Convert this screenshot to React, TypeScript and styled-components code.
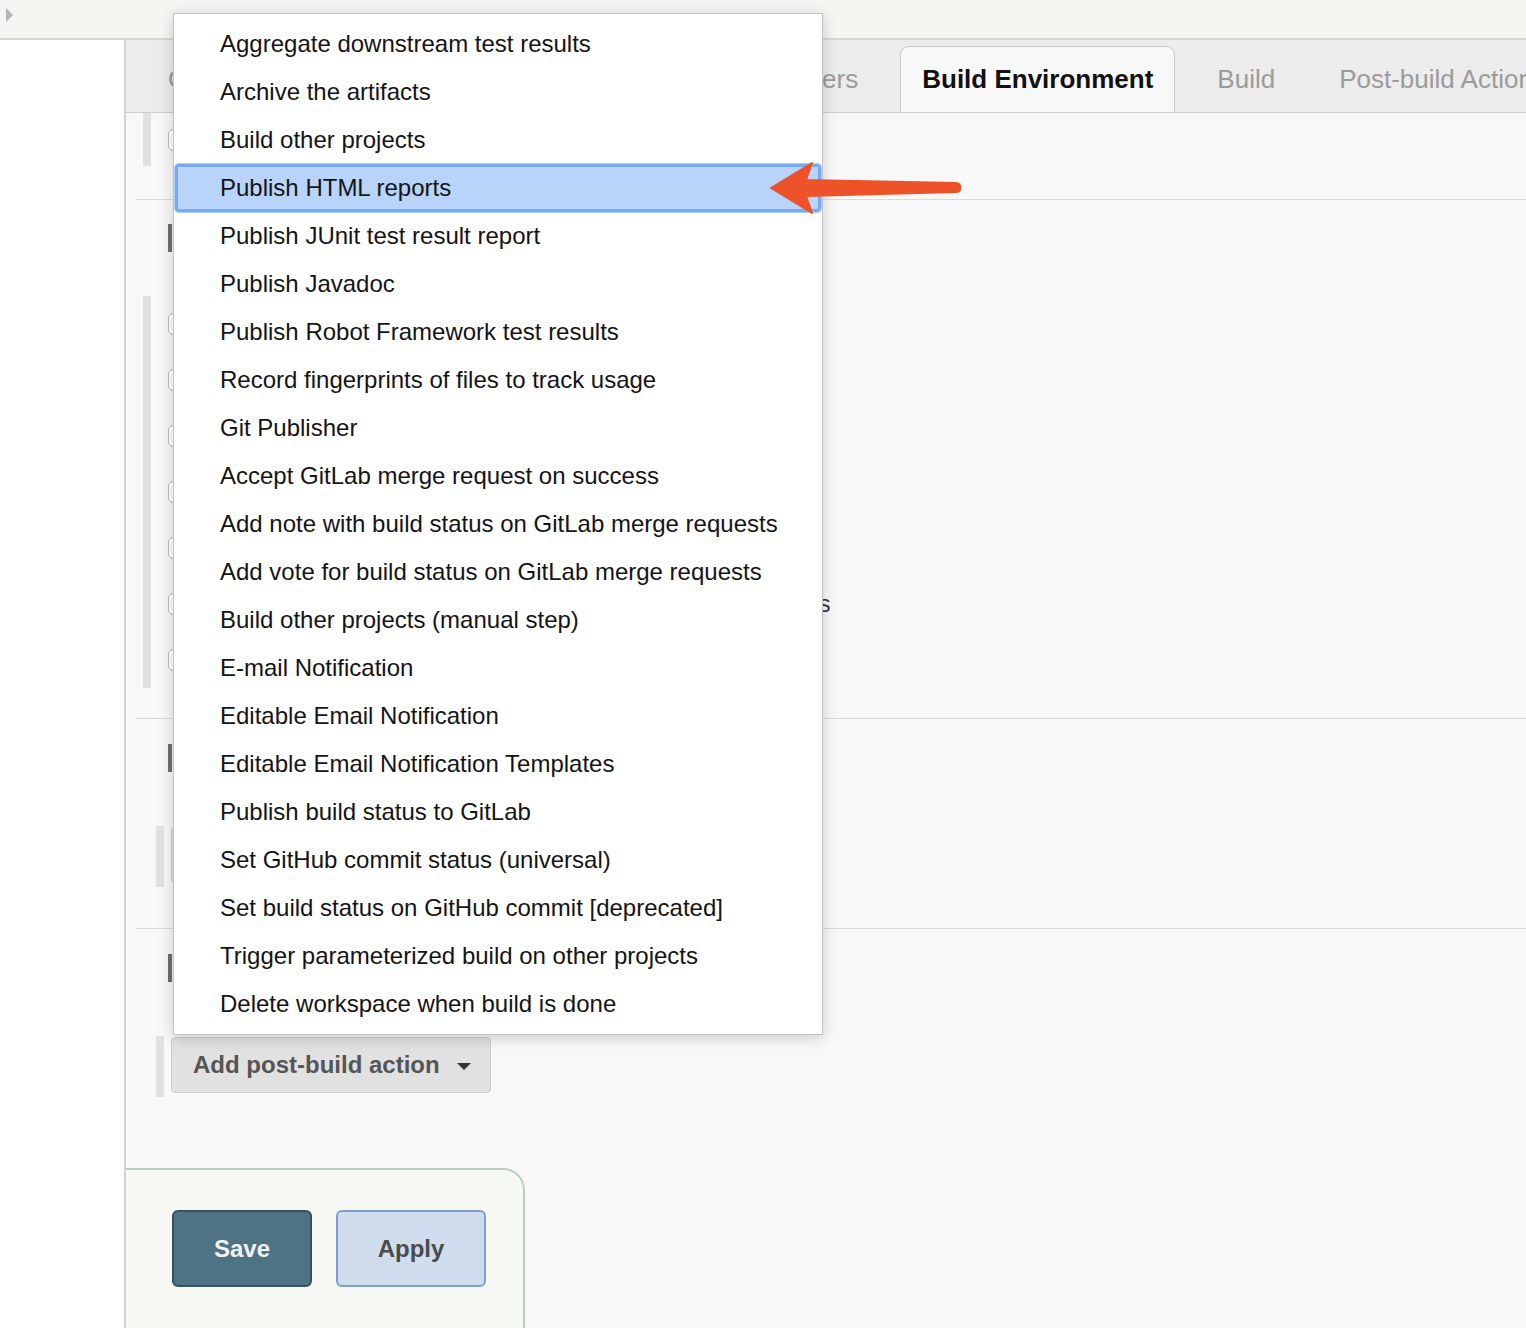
import styled, { createGlobalStyle, css } from "styled-components";

const GlobalStyle = createGlobalStyle`
  html, body {
    margin: 0;
    padding: 0;
  }
  body {
    font-family: "Liberation Sans", Arial, Helvetica, sans-serif;
    background: #f8f8f8;
  }
  * {
    box-sizing: border-box;
  }
`;

const menuItems = [
  "Aggregate downstream test results",
  "Archive the artifacts",
  "Build other projects",
  "Publish HTML reports",
  "Publish JUnit test result report",
  "Publish Javadoc",
  "Publish Robot Framework test results",
  "Record fingerprints of files to track usage",
  "Git Publisher",
  "Accept GitLab merge request on success",
  "Add note with build status on GitLab merge requests",
  "Add vote for build status on GitLab merge requests",
  "Build other projects (manual step)",
  "E-mail Notification",
  "Editable Email Notification",
  "Editable Email Notification Templates",
  "Publish build status to GitLab",
  "Set GitHub commit status (universal)",
  "Set build status on GitHub commit [deprecated]",
  "Trigger parameterized build on other projects",
  "Delete workspace when build is done",
];

const envOptions = [
  "Delete workspace before build starts",
  "Use secret text(s) or file(s)",
  "Abort the build if it's stuck",
  "Add timestamps to the Console Output",
  "Provide Configuration files",
  "Send files or execute commands over SSH after the build runs",
  "With Ant",
];

const tabs = [
  "General",
  "Source Code Management",
  "Build Triggers",
  "Build Environment",
  "Build",
  "Post-build Actions",
];

export default function App() {
  return (
    <>
      <GlobalStyle />
      <Page>
        <TopBar>
          <Expander />
        </TopBar>
        <Layout>
          <SidePanel />
          <Main>
            <TabBar>
              {tabs.map((t) => (
                <Tab key={t} $active={t === "Build Environment"}>
                  {t}
                </Tab>
              ))}
            </TabBar>

            <Section $top={0} $bottom={33}>
              <OptionGroup $indent={7} $pad={17}>
                <CheckRow $h={53}>
                  <Checkbox />
                  <CheckLabel>Execute concurrent builds if necessary</CheckLabel>
                </CheckRow>
              </OptionGroup>
            </Section>

            <Section $top={24} $bottom={30}>
              <SectionTitle>Build Environment</SectionTitle>
              <OptionGroup $indent={7} $pad={17} $gap={44}>
                {envOptions.map((o) => (
                  <CheckRow key={o} $h={56}>
                    <Checkbox />
                    <CheckLabel>{o}</CheckLabel>
                  </CheckRow>
                ))}
              </OptionGroup>
            </Section>

            <Section $top={25} $bottom={41}>
              <SectionTitle>Build</SectionTitle>
              <OptionGroup $indent={20} $pad={7} $gap={54} $padY="1px 0 4px">
                <AddButton>
                  Add build step <Caret />
                </AddButton>
              </OptionGroup>
            </Section>

            <Section $top={25} $bottom={0} $last>
              <SectionTitle>Post-build Actions</SectionTitle>
              <OptionGroup $indent={20} $pad={7} $gap={54} $padY="1px 0 4px">
                <AddButton>
                  Add post-build action <Caret />
                </AddButton>
              </OptionGroup>
            </Section>

            <FormFooter>
              <SaveButton>Save</SaveButton>
              <ApplyButton>Apply</ApplyButton>
            </FormFooter>
          </Main>
        </Layout>

        <Menu>
          {menuItems.map((item) => (
            <MenuItem key={item} $selected={item === "Publish HTML reports"}>
              {item}
            </MenuItem>
          ))}
        </Menu>

        <Pointer viewBox="0 0 210 65" width="210" height="65">
          <path
            d="M11,33 L52,8 L46,25 L196,28 A4.5,4.5 0 0 1 196,37 L46,41 L52,58 Z"
            fill="#ee5228"
            stroke="#ee5228"
            strokeWidth="2"
            strokeLinejoin="round"
          />
        </Pointer>
      </Page>
    </>
  );
}

const Page = styled.div`
  position: relative;
  width: 1526px;
  height: 1328px;
  overflow: hidden;
  display: flex;
  flex-direction: column;
`;

const TopBar = styled.header`
  height: 40px;
  flex-shrink: 0;
  background: #f5f6f1;
  border-bottom: 2px solid #d6d6d6;
  display: flex;
  align-items: flex-start;
  padding: 8px 0 0 6px;
`;

const Expander = styled.span`
  width: 0;
  height: 0;
  border-top: 7px solid transparent;
  border-bottom: 7px solid transparent;
  border-left: 7px solid #b5b5b5;
`;

const Layout = styled.div`
  flex: 1;
  display: flex;
  min-height: 0;
`;

const SidePanel = styled.aside`
  width: 126px;
  flex-shrink: 0;
  background: #fff;
  border-right: 2px solid #d2d2d2;
`;

const Main = styled.main`
  flex: 1;
  min-width: 0;
  display: flex;
  flex-direction: column;
  background: #f8f8f8;
`;

const TabBar = styled.nav`
  height: 73px;
  flex-shrink: 0;
  display: flex;
  align-items: flex-end;
  gap: 20px;
  padding-left: 20px;
  background: #ececec;
  border-bottom: 1px solid #cdcdcd;
  white-space: nowrap;
  overflow: hidden;
`;

const Tab = styled.div<{ $active?: boolean }>`
  height: 67px;
  flex-shrink: 0;
  display: flex;
  align-items: center;
  padding: 0 21px 2px;
  margin-bottom: -1px;
  font-size: 26px;
  border: 1px solid transparent;
  border-bottom: none;
  border-radius: 9px 9px 0 0;
  color: #9b9b9b;

  ${({ $active }) =>
    $active &&
    css`
      background: #f8f8f8;
      border-color: #c8c8c8;
      color: #111;
      font-weight: bold;
    `}
`;

const Section = styled.section<{ $top: number; $bottom: number; $last?: boolean }>`
  margin-left: 10px;
  padding: ${({ $top, $bottom }) => `${$top}px 0 ${$bottom}px`};
  border-bottom: ${({ $last }) => ($last ? "none" : "1px solid #dadada")};
`;

const SectionTitle = styled.h2`
  margin: 0 0 0 32px;
  height: 28px;
  line-height: 28px;
  padding-left: 12px;
  border-left: 4px solid #6e6e6e;
  font-size: 24px;
  font-weight: bold;
  color: #333;
`;

const OptionGroup = styled.div<{
  $indent: number;
  $pad: number;
  $gap?: number;
  $padY?: string;
}>`
  margin: ${({ $gap = 0 }) => $gap}px 0 0 ${({ $indent }) => $indent}px;
  padding: ${({ $padY = "0" }) => $padY};
  padding-left: ${({ $pad }) => $pad}px;
  border-left: 8px solid #e1e1e1;
  display: flex;
  flex-direction: column;
`;

const CheckRow = styled.label<{ $h: number }>`
  height: ${({ $h }) => $h}px;
  display: flex;
  align-items: center;
  gap: 5px;
`;

const Checkbox = styled.span`
  width: 22px;
  height: 22px;
  flex-shrink: 0;
  background: #fff;
  border: 1px solid #bdbdbd;
  border-radius: 5px;
`;

const CheckLabel = styled.span`
  font-size: 23px;
  color: #333;
  white-space: nowrap;
`;

const AddButton = styled.button`
  align-self: flex-start;
  height: 56px;
  display: flex;
  align-items: center;
  gap: 17px;
  padding: 0 19px 0 21px;
  background: #e1e1e1;
  border: 1px solid #cdcdcd;
  border-radius: 4px;
  font-family: inherit;
  font-size: 24px;
  font-weight: bold;
  color: #555;
`;

const Caret = styled.span`
  width: 0;
  height: 0;
  margin-top: 3px;
  border-left: 7px solid transparent;
  border-right: 7px solid transparent;
  border-top: 7px solid #333;
`;

const FormFooter = styled.div`
  flex: 1;
  width: 399px;
  margin-top: 71px;
  display: flex;
  align-items: flex-start;
  gap: 24px;
  padding: 40px 0 0 46px;
  background: #f6f8f3;
  border-top: 2px solid #b9cebf;
  border-right: 2px solid #b9cebf;
  border-top-right-radius: 22px;
`;

const FooterButton = styled.button`
  height: 77px;
  border-radius: 6px;
  border: 2px solid;
  font-family: inherit;
  font-size: 24px;
  font-weight: bold;
`;

const SaveButton = styled(FooterButton)`
  width: 140px;
  background: #4e7384;
  border-color: #37505d;
  color: #f2f2f2;
`;

const ApplyButton = styled(FooterButton)`
  width: 150px;
  background: #cfdcec;
  border-color: #7d9fcd;
  color: #4b4b4b;
`;

const Menu = styled.ul`
  position: absolute;
  left: 173px;
  top: 13px;
  width: 650px;
  margin: 0;
  padding: 6px 0;
  list-style: none;
  background: #fff;
  border: 1px solid #c4c4c4;
  box-shadow: 0 3px 14px rgba(0, 0, 0, 0.18);
`;

const MenuItem = styled.li<{ $selected?: boolean }>`
  height: 48px;
  display: flex;
  align-items: center;
  padding-left: 46px;
  font-size: 24px;
  color: #141414;
  white-space: nowrap;

  ${({ $selected }) =>
    $selected &&
    css`
      margin: 0 1px;
      padding-left: 45px;
      background: #b8d4fa;
      border-radius: 4px;
      box-shadow: inset 0 0 0 3px #77aaf3, 0 0 0 1px #aecdf8;
    `}
`;

const Pointer = styled.svg`
  position: absolute;
  left: 760px;
  top: 155px;
`;
